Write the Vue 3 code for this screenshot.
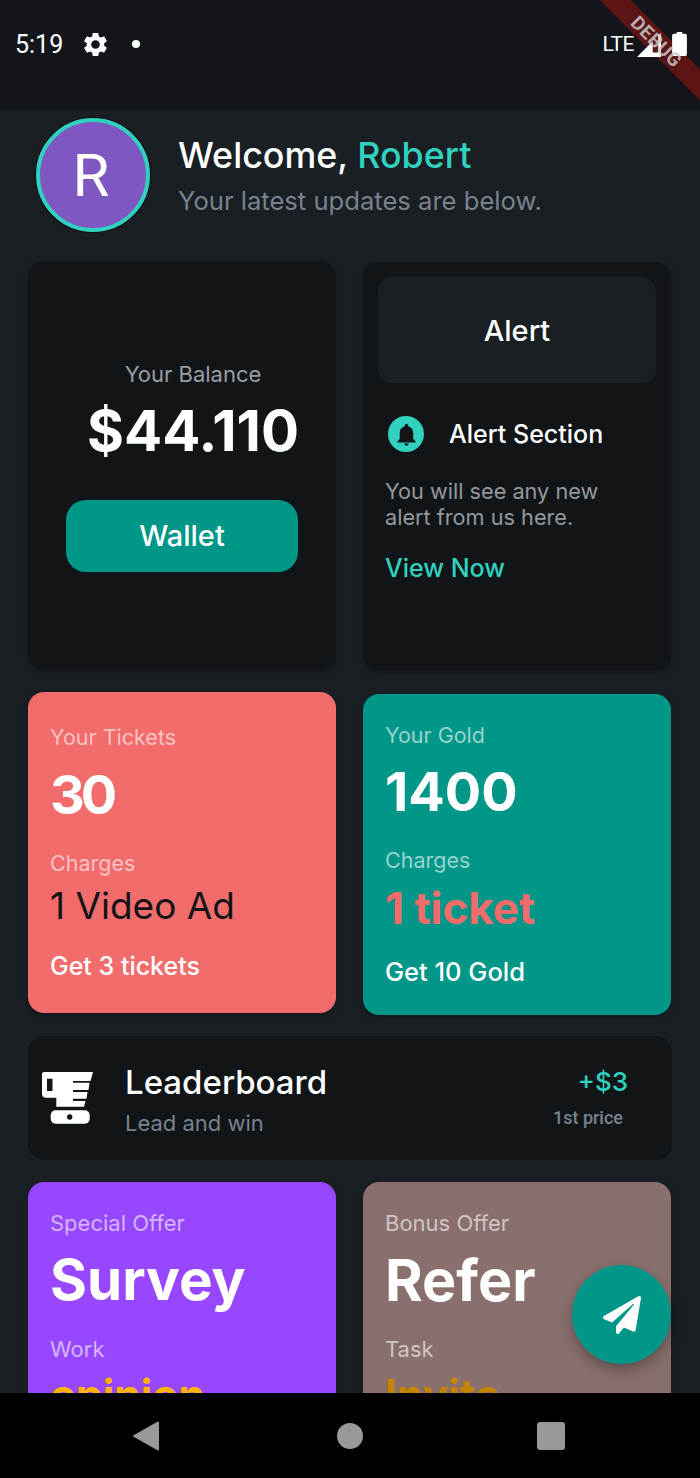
<script setup>
const bellPath = "M12 22c1.1 0 2-.9 2-2h-4c0 1.1.9 2 2 2zm6-6v-5c0-3.07-1.63-5.64-4.5-6.32V4c0-.83-.67-1.5-1.5-1.5s-1.5.67-1.5 1.5v.68C7.64 5.36 6 7.92 6 11v5l-2 2v1h16v-1l-2-2z";
const gearPath = "M19.14 12.94c.04-.3.06-.61.06-.94 0-.32-.02-.64-.07-.94l2.03-1.58c.18-.14.23-.41.12-.61l-1.92-3.32c-.12-.22-.37-.29-.59-.22l-2.39.96c-.5-.38-1.03-.7-1.62-.94l-.36-2.54c-.04-.24-.24-.41-.48-.41h-3.84c-.24 0-.43.17-.47.41l-.36 2.54c-.59.24-1.13.57-1.62.94l-2.39-.96c-.22-.08-.47 0-.59.22L2.74 8.87c-.12.21-.08.47.12.61l2.03 1.58c-.05.3-.09.63-.09.94s.02.64.07.94l-2.03 1.58c-.18.14-.23.41-.12.61l1.92 3.32c.12.22.37.29.59.22l2.39-.96c.5.38 1.03.7 1.62.94l.36 2.54c.05.24.24.41.48.41h3.84c.24 0 .44-.17.47-.41l.36-2.54c.59-.24 1.13-.56 1.62-.94l2.39.96c.22.08.47 0 .59-.22l1.92-3.32c.12-.22.07-.47-.12-.61l-2.01-1.58zM12 15.6c-1.98 0-3.6-1.62-3.6-3.6s1.62-3.6 3.6-3.6 3.6 1.62 3.6 3.6-1.62 3.6-3.6 3.6z";
const planePath = "M476 3.2L12.5 270.6c-18.1 10.4-15.8 35.6 2.2 43.2L121 358.4l287.3-253.2c5.5-4.9 13.3 2.6 8.6 8.3L176 407v80.5c0 23.6 28.5 32.9 42.5 15.8L282 426l124.6 52.2c14.2 6 30.4-2.9 33-18.2l72-432C515 7.8 493.3-6.8 476 3.2z";
</script>

<template>
  <div class="phone">
    <div class="debug-band"></div>
    <div class="status-bar">
      <span class="time">5:19</span>
      <svg class="gear" viewBox="0 0 24 24"><path :d="gearPath" fill="#fff" /></svg>
      <span class="dot"></span>
      <span class="spacer"></span>
      <span class="lte">LTE</span>
      <svg class="signal" viewBox="0 0 26 26"><path fill-rule="evenodd" d="M26 0V26H0ZM17 9V21H23V3Z" fill="#fff" /></svg>
      <svg class="battery" viewBox="0 0 16 26"><path d="M5 0h6v2h3a2 2 0 0 1 2 2v20a2 2 0 0 1-2 2H2a2 2 0 0 1-2-2V4a2 2 0 0 1 2-2h3z" fill="#fff" /></svg>
    </div>

    <div class="content">
      <div class="header">
        <div class="avatar">R</div>
        <div class="greeting">
          <div class="welcome">Welcome, <span class="teal">Robert</span></div>
          <div class="latest">Your latest updates are below.</div>
        </div>
      </div>

      <div class="row first-row">
        <div class="card dark balance">
          <div class="balance-label">Your Balance</div>
          <div class="balance-value">$44.110</div>
          <div class="wallet">Wallet</div>
        </div>
        <div class="card dark alert lowered">
          <div class="alert-head">Alert</div>
          <div class="alert-title">
            <span class="bell"><svg viewBox="0 0 24 24"><path :d="bellPath" fill="#111518" /></svg></span>
            <span>Alert Section</span>
          </div>
          <p class="alert-text">You will see any new alert from us here.</p>
          <div class="view-now">View Now</div>
        </div>
      </div>

      <div class="row second-row">
        <div class="card stat red">
          <div class="label">Your Tickets</div>
          <div class="number">30</div>
          <div class="label charges">Charges</div>
          <div class="charge-value black">1 Video Ad</div>
          <div class="action">Get 3 tickets</div>
        </div>
        <div class="card stat green">
          <div class="label">Your Gold</div>
          <div class="number">1400</div>
          <div class="label charges">Charges</div>
          <div class="charge-value coral">1 ticket</div>
          <div class="action">Get 10 Gold</div>
        </div>
      </div>

      <div class="leaderboard">
        <svg class="board-icon" viewBox="0 0 52 52">
          <path fill-rule="evenodd" fill="#fff" d="M2 0H51L48.500 9H31V10.700H47.500L46.500 18H31V20H45.500L44.500 26.700H31V29H43.500L42 34.700H14.300V25.700H4Q0 25.700 0 21.700V2Q0 0 2 0ZM5 6.700V19H10.500V6.700Z" />
          <rect x="8.700" y="38.300" width="39" height="13.500" rx="5" fill="#fff" />
          <circle cx="27.700" cy="45" r="2.700" fill="#111518" />
        </svg>
        <div class="board-text">
          <div class="board-title">Leaderboard</div>
          <div class="board-sub">Lead and win</div>
        </div>
        <div class="board-prize">
          <div class="prize-value">+$3</div>
          <div class="prize-label">1st price</div>
        </div>
      </div>

      <div class="row">
        <div class="card offer purple">
          <div class="label">Special Offer</div>
          <div class="offer-name">Survey</div>
          <div class="label task">Work</div>
          <div class="offer-value amber">opinion</div>
        </div>
        <div class="card offer brown">
          <div class="label">Bonus Offer</div>
          <div class="offer-name refer">Refer</div>
          <div class="label task">Task</div>
          <div class="offer-value gold">Invite</div>
        </div>
      </div>
    </div>

    <div class="nav-bar">
      <svg class="nav-back" viewBox="0 0 26 30"><path d="M25 1.500V28.500L1 15Z" fill="#999" stroke="#999" stroke-width="2" stroke-linejoin="round" /></svg>
      <span class="nav-home"></span>
      <span class="nav-recent"></span>
    </div>

    <div class="fab"><svg viewBox="0 0 512 512"><path :d="planePath" fill="#fff" /></svg></div>
    <div class="debug-label">DEBUG</div>
  </div>
</template>

<style>
html, body {
  margin: 0;
  background: #000;
}
</style>

<style scoped>
.phone {
  position: relative;
  display: flex;
  flex-direction: column;
  width: 700px;
  height: 1478px;
  overflow: hidden;
  background: #1a1f24;
  font-family: "Inter", "Noto Sans", sans-serif;
  color: #fff;
}
.status-bar {
  display: flex;
  align-items: center;
  flex: 0 0 110px;
  box-sizing: border-box;
  height: 110px;
  padding: 0 13px 22px 15px;
  background: #12151a;
  font-family: "Roboto", sans-serif;
}
.status-bar > * {
  position: relative;
  z-index: 2;
}
.time {
  font-size: 25px;
}
.gear {
  width: 29px;
  height: 29px;
  margin-left: 18px;
}
.dot {
  width: 8px;
  height: 8px;
  margin-left: 22px;
  border-radius: 50%;
  background: #fff;
}
.spacer {
  flex: 1;
}
.lte {
  font-size: 21px;
  letter-spacing: -0.5px;
}
.signal {
  width: 24px;
  height: 24px;
  margin-left: 3px;
  margin-top: 2px;
}
.battery {
  width: 15px;
  height: 24px;
  margin-left: 11px;
}
.content {
  flex: 1;
  min-height: 0;
  overflow: hidden;
  box-sizing: border-box;
  padding: 8px 28px 0;
}
.header {
  display: flex;
  align-items: center;
  height: 114px;
  padding-left: 8px;
}
.avatar {
  display: flex;
  align-items: center;
  justify-content: center;
  box-sizing: border-box;
  width: 114px;
  height: 114px;
  padding-right: 4px;
  border: 4px solid #30d1bf;
  border-radius: 50%;
  background: #7e57c2;
  font-family: "Roboto", sans-serif;
  font-size: 60px;
  box-shadow: 0 0 0 1px #0c0f12;
}
.greeting {
  margin-left: 28px;
  padding-bottom: 2px;
}
.welcome {
  font-size: 35.800px;
  font-weight: 500;
  line-height: 46px;
}
.teal {
  color: #30d1bf;
}
.latest {
  margin-top: 7px;
  font-size: 25.600px;
  line-height: 32px;
  color: #79828e;
}
.row {
  display: grid;
  grid-template-columns: 308px 308px;
  gap: 27px;
  align-items: start;
}
.first-row {
  margin-top: 29px;
}
.second-row {
  margin-top: 21px;
}
.card {
  box-sizing: border-box;
  border-radius: 16px;
  box-shadow: 0 2px 4px rgba(0, 0, 0, 0.25);
}
.lowered {
  margin-top: 1px;
}
.dark {
  height: 409px;
  background: #111518;
}
.balance {
  padding-top: 100px;
  text-align: center;
}
.balance-label {
  padding-left: 22px;
  font-size: 22px;
  line-height: 26px;
  color: #9a9ea3;
}
.balance-value {
  margin-top: 13px;
  padding-left: 22px;
  font-size: 56.500px;
  font-weight: 700;
  line-height: 62px;
}
.wallet {
  width: 232px;
  height: 72px;
  margin: 38px 0 0 38px;
  border-radius: 20px;
  background: #009688;
  font-size: 29px;
  font-weight: 500;
  line-height: 72px;
}
.alert {
  padding: 15px 15px 0;
}
.alert-head {
  height: 106px;
  border-radius: 14px;
  background: #1a1f24;
  font-size: 29px;
  font-weight: 500;
  line-height: 108px;
  text-align: center;
}
.alert-title {
  display: flex;
  align-items: center;
  margin-top: 33px;
  padding-left: 10px;
  font-size: 25px;
  font-weight: 500;
  line-height: 36px;
}
.bell {
  display: flex;
  align-items: center;
  justify-content: center;
  width: 36px;
  height: 36px;
  margin-right: 25px;
  border-radius: 50%;
  background: #30d1bf;
}
.bell svg {
  width: 27px;
  height: 27px;
}
.alert-text {
  margin: 26px 0 0 7px;
  width: 240px;
  font-size: 21.700px;
  line-height: 26px;
  color: #95989c;
}
.view-now {
  margin: 21px 0 0 7px;
  font-size: 25px;
  font-weight: 500;
  line-height: 34px;
  color: #30d1bf;
}
.stat {
  height: 321px;
  padding: 32px 22px 0;
}
.red {
  background: #f36c6c;
}
.green {
  margin-top: 2px;
  padding-top: 28px;
  background: #009688;
}
.label {
  font-size: 21.500px;
  line-height: 26px;
  color: rgba(255, 255, 255, 0.6);
}
.number {
  margin-top: 14px;
  font-size: 54px;
  font-weight: 700;
  line-height: 62px;
}
.red .number {
  letter-spacing: -4px;
}
.green .number {
  margin-top: 13px;
}
.charges {
  margin-top: 24px;
}
.charge-value {
  margin-top: 8px;
  font-size: 37px;
  line-height: 44px;
}
.black {
  color: #111518;
}
.coral {
  margin-top: 13px;
  font-size: 44px;
  font-weight: 700;
  color: #f36c6c;
}
.action {
  margin-top: 22px;
  font-size: 25px;
  font-weight: 500;
  line-height: 32px;
}
.green .action {
  margin-top: 26px;
  font-size: 25.500px;
}
.leaderboard {
  display: flex;
  align-items: center;
  box-sizing: border-box;
  height: 124px;
  margin: 21px 0 22px;
  padding: 0 44px 0 14px;
  border-radius: 16px;
  background: #111518;
}
.board-icon {
  flex: none;
  width: 52px;
  height: 52px;
}
.board-text {
  flex: 1;
  margin-left: 31px;
  padding-top: 3px;
}
.board-title {
  font-size: 33px;
  font-weight: 500;
  line-height: 40px;
}
.board-sub {
  margin-top: 6px;
  font-size: 22px;
  line-height: 30px;
  color: #79828e;
}
.board-prize {
  text-align: right;
}
.prize-value {
  font-size: 26px;
  font-weight: 500;
  line-height: 32px;
  color: #30d1bf;
}
.prize-label {
  margin-top: 8px;
  margin-right: 5px;
  font-family: "Roboto", sans-serif;
  font-size: 18px;
  font-weight: 500;
  line-height: 24px;
  color: #79828e;
}
.offer {
  height: 300px;
  padding: 28px 22px 0;
  border-radius: 16px 16px 0 0;
}
.offer .label {
  font-size: 22px;
}
.purple {
  background: #9747ff;
}
.brown {
  background: #896f6d;
}
.offer-name {
  margin-top: 8px;
  font-size: 56.500px;
  font-weight: 700;
  line-height: 72px;
}
.refer {
  font-size: 57.500px;
}
.task {
  margin-top: 20px;
}
.offer-value {
  margin-top: 7px;
  font-size: 42.500px;
  font-weight: 700;
  line-height: 52px;
}
.amber {
  color: #ffb300;
}
.gold {
  color: #c68400;
}
.nav-bar {
  position: relative;
  display: flex;
  align-items: center;
  justify-content: center;
  flex: 0 0 85px;
  padding-right: 2px;
  background: #000;
}
.nav-back {
  width: 26px;
  height: 30px;
  margin-right: 178px;
}
.nav-home {
  width: 26px;
  height: 26px;
  border-radius: 50%;
  background: #999;
}
.nav-recent {
  width: 28px;
  height: 28px;
  margin-left: 174px;
  border-radius: 3px;
  background: #999;
}
.fab {
  position: absolute;
  left: 572px;
  top: 1265px;
  display: flex;
  align-items: center;
  justify-content: center;
  width: 99px;
  height: 99px;
  border-radius: 50%;
  background: #009688;
  box-shadow: 0 6px 14px rgba(0, 0, 0, 0.3);
}
.fab svg {
  width: 38px;
  height: 38px;
}
.debug-band {
  position: absolute;
  left: 560px;
  top: 34px;
  z-index: 1;
  width: 200px;
  height: 22px;
  transform: rotate(45deg);
  background: #5c1414;
}
.debug-label {
  position: absolute;
  left: 606px;
  top: 29px;
  z-index: 3;
  width: 100px;
  height: 26px;
  transform: rotate(45deg);
  font-family: "Roboto", sans-serif;
  font-size: 19px;
  font-weight: 700;
  line-height: 26px;
  letter-spacing: 0.5px;
  text-align: center;
  color: rgba(200, 200, 200, 0.85);
}
</style>
